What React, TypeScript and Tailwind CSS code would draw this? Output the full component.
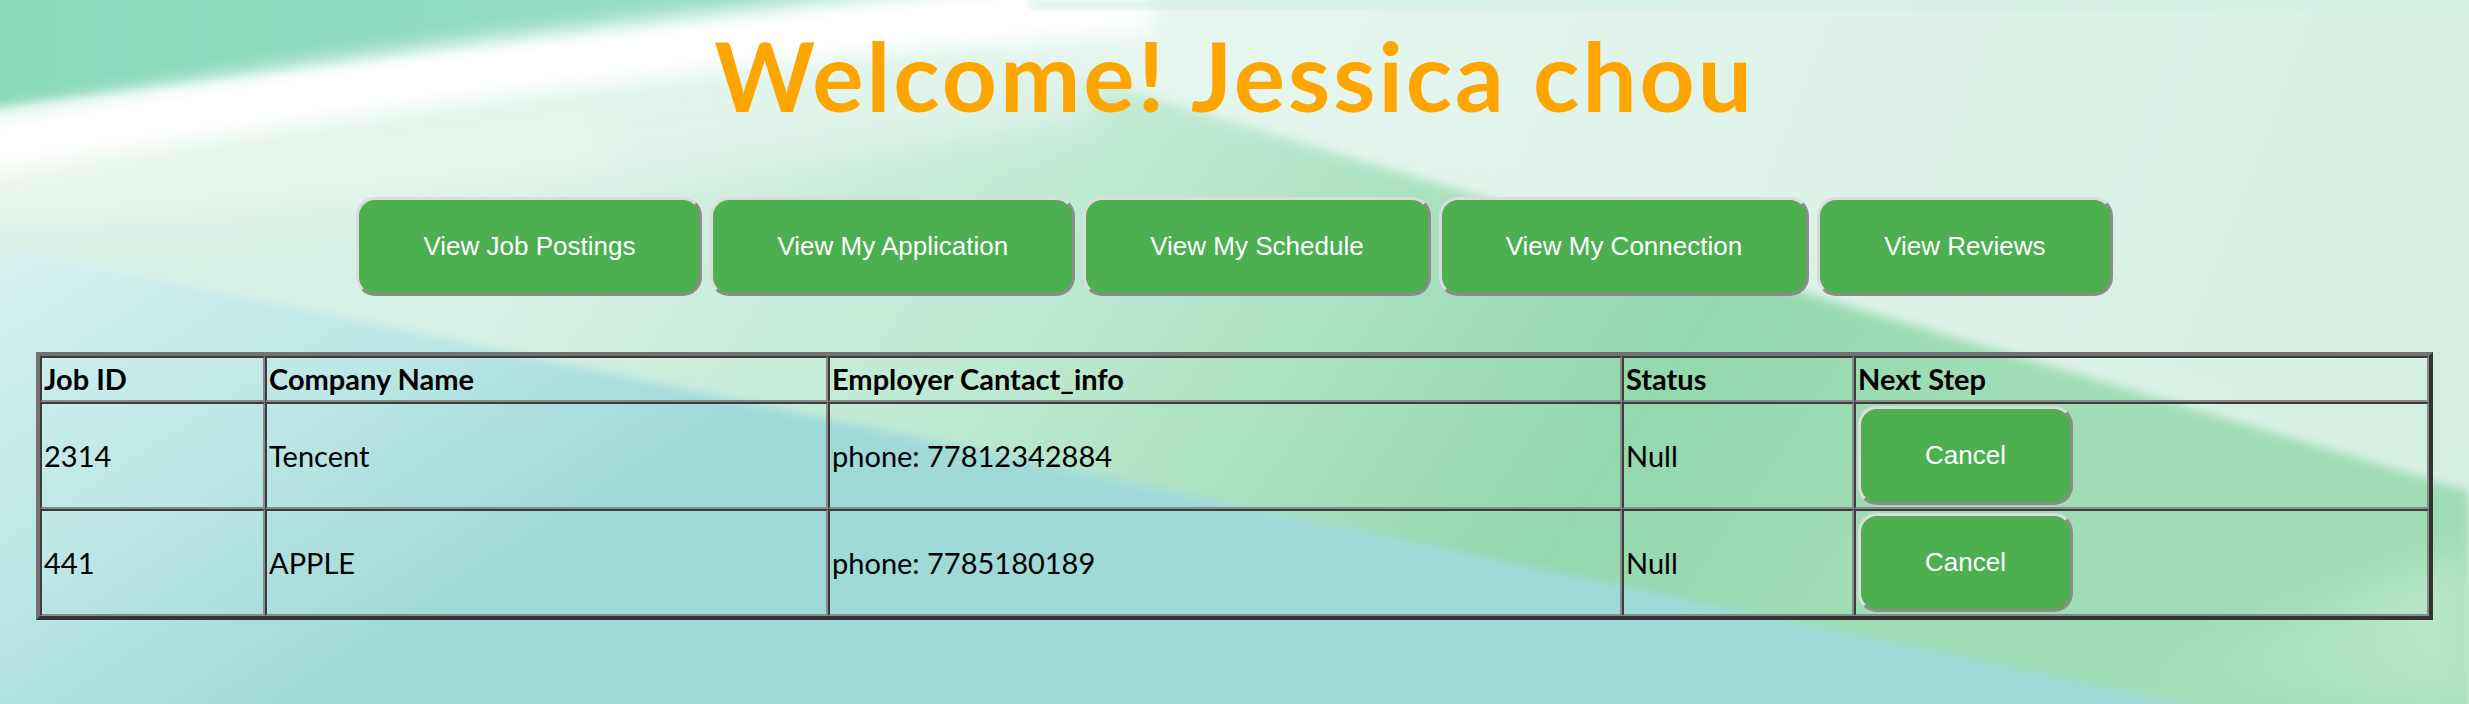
import React from "react";

const navItems = [
  "View Job Postings",
  "View My Application",
  "View My Schedule",
  "View My Connection",
  "View Reviews",
];

const rows = [
  { id: "2314", company: "Tencent", contact: "phone: 77812342884", status: "Null" },
  { id: "441", company: "APPLE", contact: "phone: 7785180189", status: "Null" },
];

function GreenButton({ label }: { label: string }) {
  return (
    <button
      type="button"
      className="block cursor-pointer rounded-[19px] border-[3px] border-solid border-t-[#dcdcdc] border-l-[#dcdcdc] border-r-[#8c8c8c] border-b-[#8c8c8c] bg-[#4caf50] px-[64px] py-[32px] text-center text-[26px] leading-[29px] text-white [font-family:'Liberation_Sans',Arial,sans-serif]"
    >
      {label}
    </button>
  );
}

function Background() {
  return (
    <svg
      className="absolute inset-0 h-full w-full"
      viewBox="0 0 2469 704"
      preserveAspectRatio="none"
      aria-hidden="true"
    >
      <defs>
        <linearGradient id="bg-base" x1="0" y1="0" x2="1" y2="1">
          <stop offset="0" stopColor="#e4f5ee" />
          <stop offset="1" stopColor="#d4efe4" />
        </linearGradient>
        <linearGradient id="bg-band" gradientUnits="userSpaceOnUse" x1="700" y1="0" x2="1750" y2="704">
          <stop offset="0" stopColor="#d6f1e5" />
          <stop offset="0.4" stopColor="#bae7cf" />
          <stop offset="0.8" stopColor="#93d8ad" />
          <stop offset="1" stopColor="#9fddb5" />
        </linearGradient>
        <linearGradient id="bg-topright" gradientUnits="userSpaceOnUse" x1="1200" y1="0" x2="2469" y2="500">
          <stop offset="0" stopColor="#e6f6ef" />
          <stop offset="1" stopColor="#d3efe1" />
        </linearGradient>
        <linearGradient id="bg-cyan" gradientUnits="userSpaceOnUse" x1="0" y1="240" x2="300" y2="704">
          <stop offset="0" stopColor="#d6f1ef" />
          <stop offset="0.5" stopColor="#bfe8e5" />
          <stop offset="1" stopColor="#9fdad8" />
        </linearGradient>
        <linearGradient id="bg-mint" gradientUnits="userSpaceOnUse" x1="0" y1="0" x2="1100" y2="0">
          <stop offset="0" stopColor="#8ad9bb" />
          <stop offset="0.7" stopColor="#98dec6" />
          <stop offset="1" stopColor="#b8e8da" />
        </linearGradient>
        <linearGradient id="bg-br" gradientUnits="userSpaceOnUse" x1="2100" y1="704" x2="2469" y2="560">
          <stop offset="0" stopColor="#aee3c2" stopOpacity="0" />
          <stop offset="1" stopColor="#bfe9d0" />
        </linearGradient>
        <filter id="blur-s" x="-10%" y="-10%" width="120%" height="120%">
          <feGaussianBlur stdDeviation="4" />
        </filter>
        <filter id="blur-m" x="-10%" y="-50%" width="120%" height="200%">
          <feGaussianBlur stdDeviation="10" />
        </filter>
        <filter id="blur-l" x="-10%" y="-50%" width="120%" height="200%">
          <feGaussianBlur stdDeviation="22" />
        </filter>
      </defs>

      <rect x="0" y="0" width="2469" height="704" fill="url(#bg-base)" />
      <polygon points="833,0 2469,490 2469,780 0,245 0,0" fill="url(#bg-band)" filter="url(#blur-s)" />
      <polygon points="840,-20 2500,-20 2500,492 833,0" fill="url(#bg-topright)" filter="url(#blur-m)" />
      <polygon points="-20,241 2500,770 2500,780 -20,780" fill="url(#bg-cyan)" filter="url(#blur-s)" />
      <polygon points="2000,704 2469,560 2469,704" fill="url(#bg-br)" filter="url(#blur-l)" />
      <path d="M-20,150 C 300,120 700,60 1100,10 L 1100,120 C 700,170 300,220 -20,240 Z" fill="#e4f5ee" opacity="0.85" filter="url(#blur-l)" />
      <path d="M-20,-20 L 1150,-20 L 1150,4 C 700,22 300,70 -20,110 Z" fill="url(#bg-mint)" filter="url(#blur-s)" />
      <path d="M-20,150 C 250,100 650,40 1150,2" stroke="#ffffff" strokeWidth="60" fill="none" filter="url(#blur-m)" />
      <path d="M-20,146 C 250,98 650,39 1150,2" stroke="#ffffff" strokeWidth="18" fill="none" opacity="0.9" filter="url(#blur-s)" />
      <path d="M-20,195 C 200,180 380,160 600,135" stroke="#f3f9ea" strokeWidth="30" fill="none" opacity="0.8" filter="url(#blur-l)" />
      <rect x="1030" y="0" width="1439" height="10" fill="#cdeee3" filter="url(#blur-s)" opacity="0.7" />
    </svg>
  );
}

export default function App() {
  const cell =
    "border-2 border-solid border-t-[#3c3c3c] border-l-[#3c3c3c] border-r-[#8a8a8a] border-b-[#8a8a8a] p-[2px] text-left align-middle";
  return (
    <div className="relative h-[704px] w-full overflow-hidden">
      <Background />
      <div className="relative">
        <h1 className="pt-[17px] text-center text-[96px] font-bold leading-[115px] tracking-[3px] text-[#ffa500] [font-family:Lato,'Noto_Sans',sans-serif]">
          Welcome! Jessica chou
        </h1>

        <nav className="mt-[65px] flex justify-center gap-[8px]">
          {navItems.map((n) => (
            <GreenButton key={n} label={n} />
          ))}
        </nav>

        <table className="mx-auto mt-[56px] w-[2397px] table-fixed border-separate border-spacing-0 border-[4px] border-solid border-t-[#727272] border-l-[#727272] border-r-[#333333] border-b-[#333333] text-[29px] text-black [font-family:Lato,'Noto_Sans',sans-serif]">
          <colgroup>
            <col className="w-[225px]" />
            <col className="w-[563px]" />
            <col className="w-[794px]" />
            <col className="w-[232px]" />
            <col className="w-[575px]" />
          </colgroup>
          <thead>
            <tr className="leading-[38px]">
              <th className={`${cell} font-bold`}>Job ID</th>
              <th className={`${cell} font-bold`}>Company Name</th>
              <th className={`${cell} font-bold`}>Employer Cantact_info</th>
              <th className={`${cell} font-bold`}>Status</th>
              <th className={`${cell} font-bold`}>Next Step</th>
            </tr>
          </thead>
          <tbody>
            {rows.map((r) => (
              <tr key={r.id} className="leading-[38px]">
                <td className={cell}>{r.id}</td>
                <td className={cell}>{r.company}</td>
                <td className={cell}>{r.contact}</td>
                <td className={cell}>{r.status}</td>
                <td className={cell}>
                  <GreenButton label="Cancel" />
                </td>
              </tr>
            ))}
          </tbody>
        </table>
      </div>
    </div>
  );
}
